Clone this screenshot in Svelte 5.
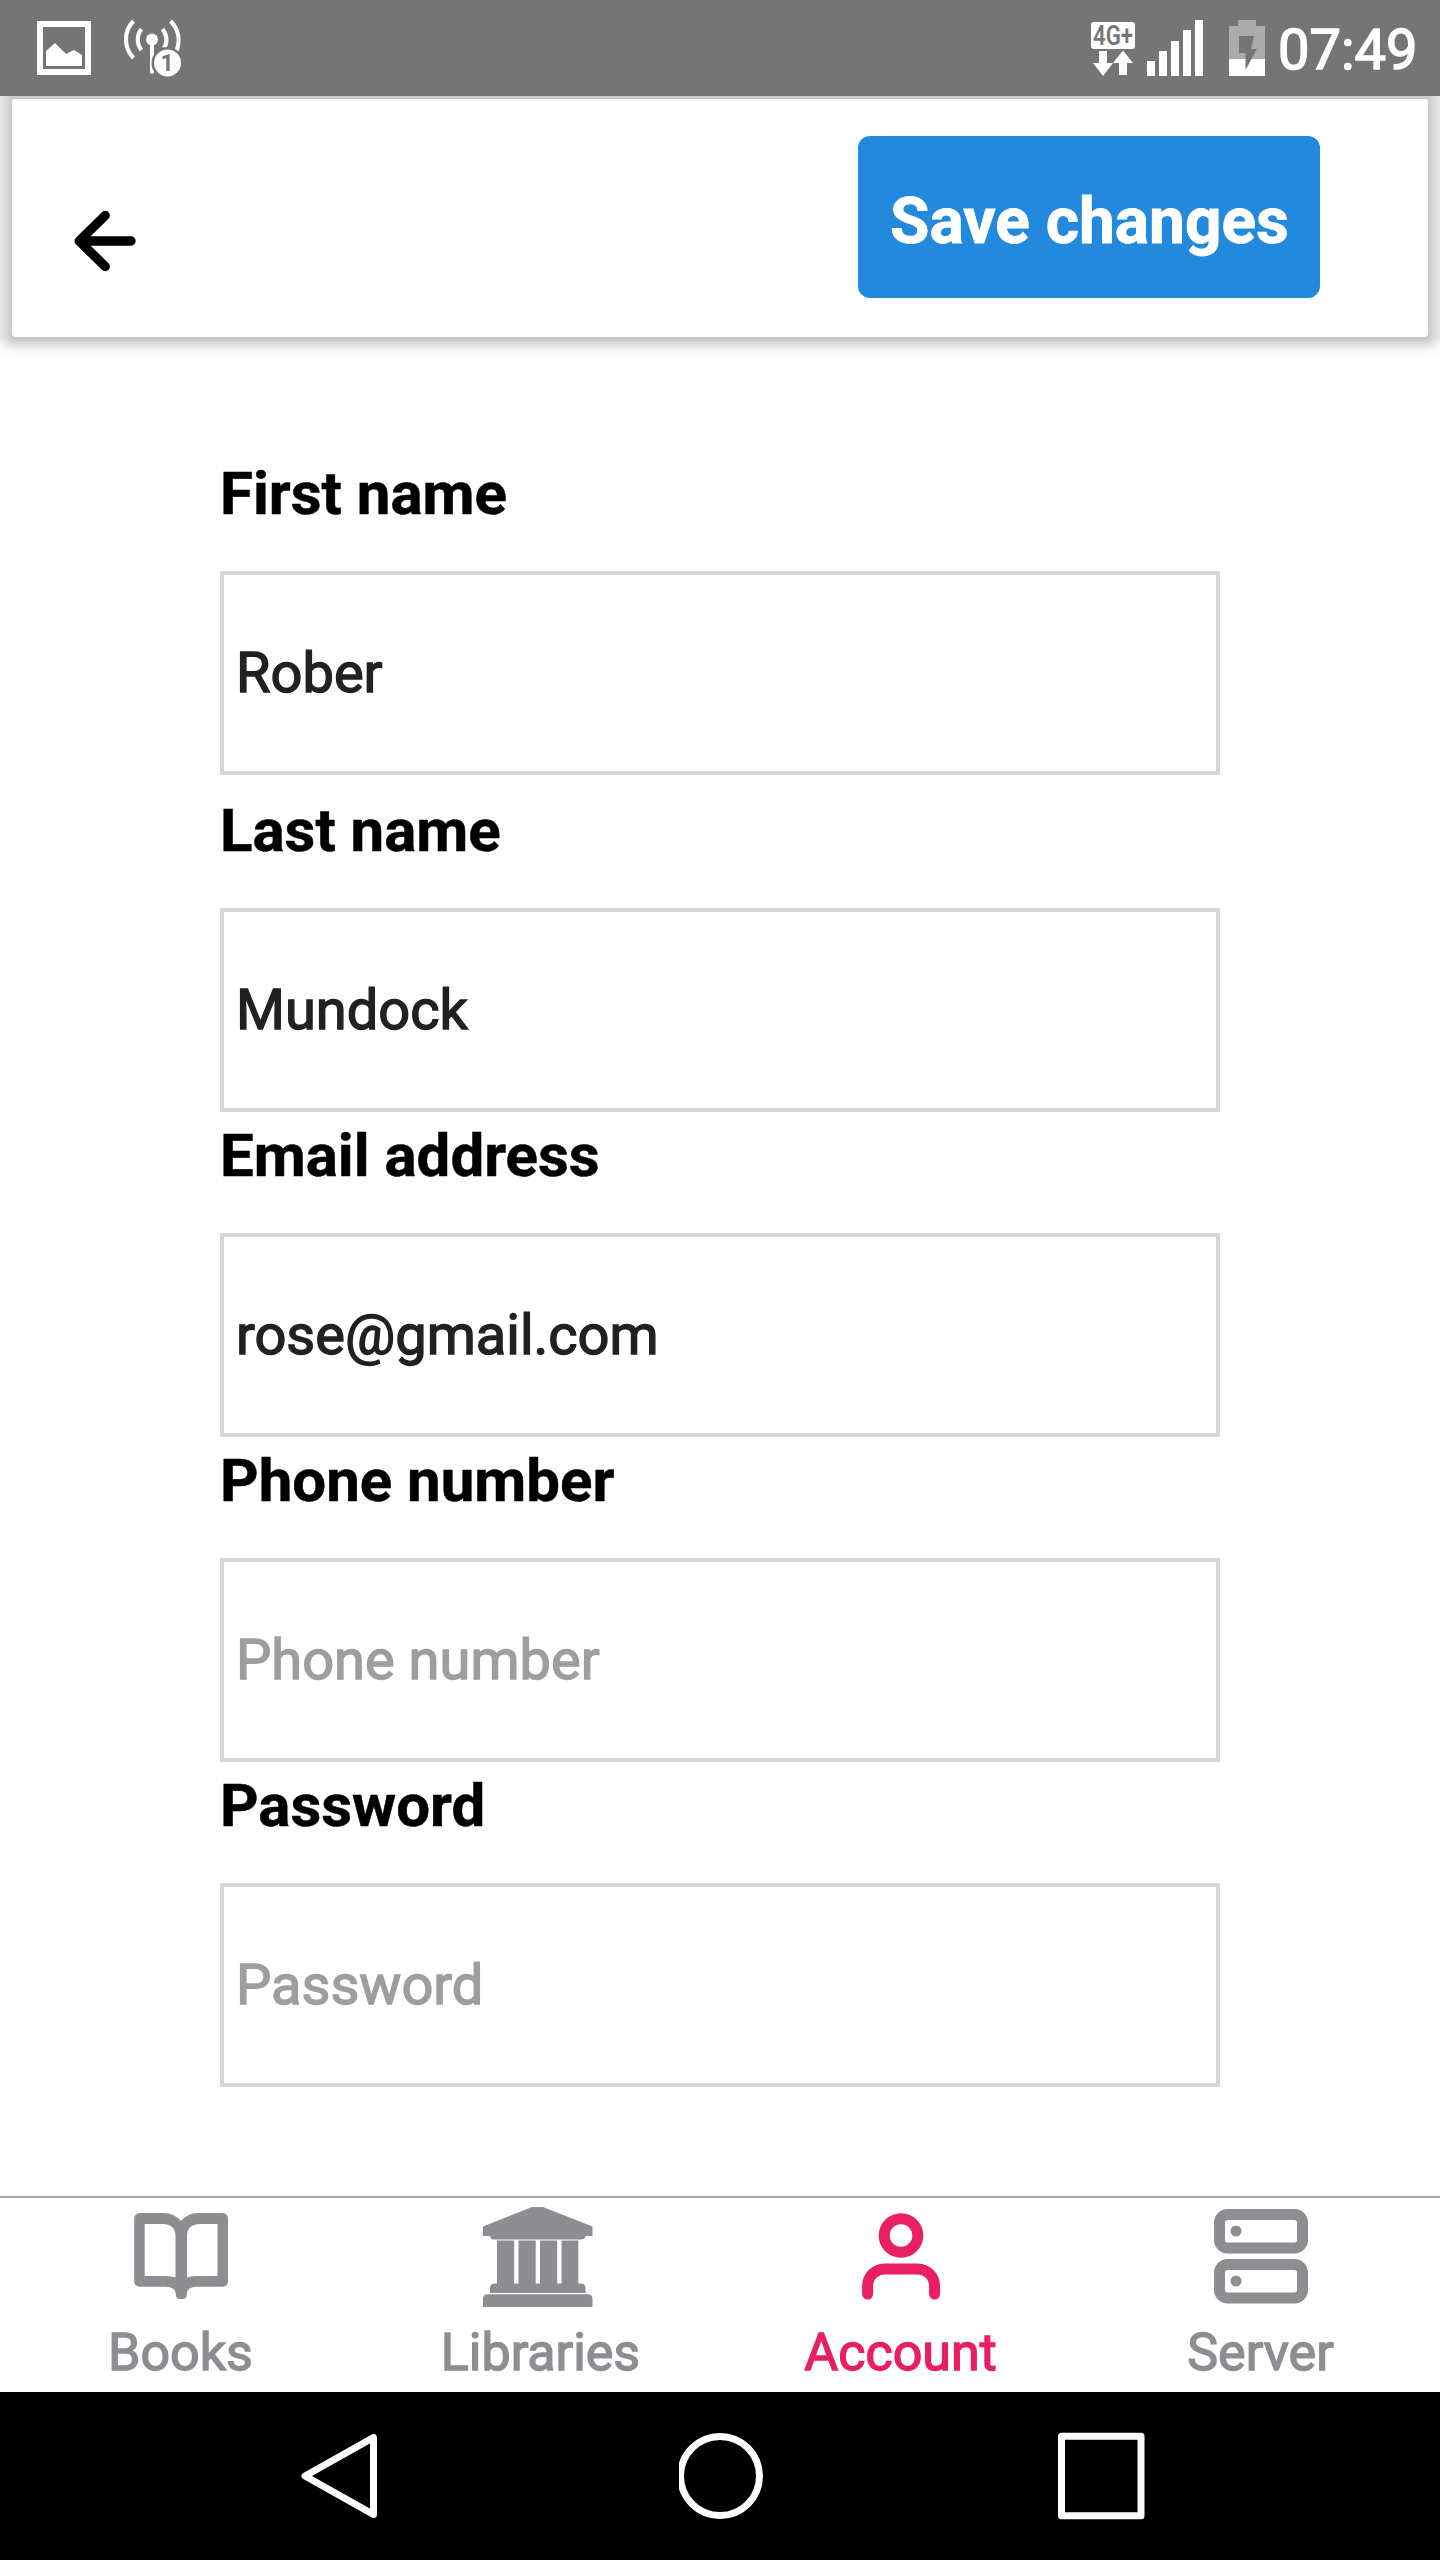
<script>
  let fields = $state([
    { id: 'first', label: 'First name', type: 'text', value: 'Rober' },
    { id: 'last', label: 'Last name', type: 'text', value: 'Mundock' },
    { id: 'email', label: 'Email address', type: 'text', value: 'rose@gmail.com' },
    { id: 'phone', label: 'Phone number', type: 'text', value: '' },
    { id: 'password', label: 'Password', type: 'password', value: '' }
  ]);
</script>

<div class="screen">
  <div class="status">
    <svg class="status-left" width="200" height="96" viewBox="0 0 200 96">
      <rect x="40" y="24" width="48" height="48" fill="none" stroke="#fff" stroke-width="6" />
      <path d="M46 51L55 43L66 54L74 50L82 55V66H46Z" fill="#fff" />
      <g fill="none" stroke="#fff" stroke-width="4.2">
        <path d="M133.500 21C123.500 31 123.500 48 133.500 58" />
        <path d="M141.500 29C136.500 35 136.500 44 141.500 50" />
        <path d="M162.500 29C167.500 35 167.500 44 163.500 48" />
        <path d="M170.500 21C178.500 29 180.500 40 176.500 51" />
      </g>
      <circle cx="152" cy="39.500" r="6" fill="#fff" />
      <rect x="150" y="40" width="4" height="33.500" fill="#fff" />
      <circle cx="167.500" cy="63" r="16" fill="#757575" />
      <circle cx="167.500" cy="63" r="13.500" fill="#fff" />
      <text class="badge" x="167" y="71" text-anchor="middle">1</text>
    </svg>
    <div class="status-right">
      <svg width="176" height="96" viewBox="1090 0 176 96">
        <rect x="1091" y="22" width="44" height="27" rx="3" fill="#fff" />
        <text class="network" x="1093" y="45" textLength="40" lengthAdjust="spacingAndGlyphs">4G+</text>
        <path d="M1099 51H1107V63H1113L1103 76L1093 63H1099Z" fill="#fff" />
        <path d="M1123 50.500L1133 63H1127V75H1119V63H1113Z" fill="#fff" />
        <path d="M1147 61h8v15h-8zM1159 51h8v25h-8zM1171 41h8v35h-8zM1183 30h8v46h-8zM1195 20h8v56h-8z" fill="#fff" />
        <path d="M1238 20H1256V26H1265V59H1229V26H1238Z" fill="#ababab" />
        <rect x="1229" y="59" width="36" height="17" fill="#fff" />
        <path d="M1239 36H1254L1251 49H1257L1245.500 70V53H1239Z" fill="#757575" />
      </svg>
      <span class="time">07:49</span>
    </div>
  </div>

  <header>
    <div class="bar">
      <svg class="back" width="64" height="64" viewBox="0 0 64 64">
        <path d="M33.200 6.500L7.200 32L33.200 57.500M7.200 32H59" fill="none" stroke="#000" stroke-width="9.400" stroke-linecap="round" stroke-linejoin="round" />
      </svg>
      <button class="save">Save changes</button>
    </div>
  </header>

  <main>
    {#each fields as field, i}
      <div class="field" class:spaced={i === 0}>
        <label for={field.id}>{field.label}</label>
        <input id={field.id} type={field.type} value={field.value} placeholder={field.label} />
      </div>
    {/each}
  </main>

  <nav class="tabs">
    <div class="tab">
      <svg width="120" height="120" viewBox="120 2198 120 120" fill="currentColor" fill-rule="evenodd">
        <path d="M140 2213H164Q174 2213 181 2221Q188 2213 198 2213H222.500Q228 2213.500 228 2219V2281Q228 2286.500 222.500 2286.700H197Q187 2287 187 2293.500Q186.500 2299 183 2299H179.500Q176 2299 175.700 2293.500Q175 2287 166 2286.700H140Q134.200 2286.500 134.200 2281V2219Q134.200 2213.500 140 2213ZM144.700 2224H164Q175.500 2225 175.500 2236V2277.500Q171 2276 166 2276H144.700ZM217.500 2224H198.500Q187 2225 187 2236V2277.500Q191 2276 196 2276H217.500Z" />
      </svg>
      <span>Books</span>
    </div>
    <div class="tab">
      <svg width="120" height="120" viewBox="480 2198 120 120" fill="currentColor">
        <path d="M483 2226.500L532 2207H543L592.500 2226.500V2236H585.500Q585 2239.500 581 2239.500H494Q490.500 2239.500 490 2236H483Z" />
        <path d="M497 2240.600h17.200v44h-17.200zM518.500 2240.600h17.200v44h-17.200zM540 2240.600h17.200v44h-17.200zM561.500 2240.600h16.800v44h-16.800z" />
        <path d="M490 2293V2288Q490 2283.500 495 2283.500H581Q585.500 2283.500 585.500 2288V2293ZM483 2307V2299Q483 2294.200 488 2294.200H587.500Q592.500 2294.200 592.500 2299V2307Z" />
      </svg>
      <span>Libraries</span>
    </div>
    <div class="tab active">
      <svg width="120" height="120" viewBox="840 2198 120 120" fill="none" stroke="currentColor" stroke-width="11" stroke-linecap="round">
        <circle cx="901" cy="2235.500" r="16.800" />
        <path d="M867.600 2294V2286A17 17 0 0 1 884.600 2269H917.600A17 17 0 0 1 934.600 2286V2294" />
      </svg>
      <span>Account</span>
    </div>
    <div class="tab">
      <svg width="120" height="120" viewBox="1200 2198 120 120" fill="none" stroke="currentColor" stroke-width="11">
        <rect x="1219.500" y="2214.500" width="83" height="33.500" rx="8" />
        <rect x="1219.500" y="2264.500" width="83" height="33.500" rx="8" />
        <g fill="currentColor" stroke="none">
          <circle cx="1236" cy="2231" r="5.500" />
          <circle cx="1236" cy="2281" r="5.500" />
        </g>
      </svg>
      <span>Server</span>
    </div>
  </nav>

  <div class="system">
    <svg width="88" height="88" viewBox="0 0 88 88"><path d="M5 44L73.500 5.500V82.500Z" stroke-linejoin="round" /></svg>
    <svg width="88" height="88" viewBox="0 0 88 88"><circle cx="41" cy="44" r="39.500" /></svg>
    <svg width="88" height="88" viewBox="0 0 88 88"><rect x="4.500" y="4.300" width="79.500" height="79.500" stroke-linejoin="round" /></svg>
  </div>
</div>

<style>
  :global(body) {
    background: #fff;
  }
  .screen {
    width: 1440px;
    height: 2560px;
    display: flex;
    flex-direction: column;
    overflow: hidden;
    font-family: Roboto, sans-serif;
    background: #fff;
  }
  svg {
    display: block;
    flex: none;
  }
  .status {
    height: 96px;
    flex: none;
    display: flex;
    justify-content: space-between;
    background: #757575;
    color: #fff;
  }
  .status-right {
    display: flex;
    width: 350px;
  }
  .badge {
    font-size: 23px;
    font-weight: 700;
    fill: #757575;
  }
  .network {
    font-size: 27px;
    font-weight: 600;
    fill: #757575;
  }
  .time {
    margin-left: 12px;
    padding-top: 16px;
    font-size: 56px;
    line-height: 68px;
    -webkit-text-stroke: 1.5px currentColor;
  }
  header {
    flex: none;
    height: 242px;
    box-sizing: border-box;
    padding: 3px 12px 1px;
    background: linear-gradient(90deg, #e6e6e6, #cbcbcb 12px, #cbcbcb 1428px, #e6e6e6);
    box-shadow: 0 8px 14px -4px rgba(0, 0, 0, 0.34);
  }
  .bar {
    height: 238px;
    display: flex;
    align-items: flex-start;
    justify-content: space-between;
    box-sizing: border-box;
    padding: 37px 108px 0 60px;
    border-radius: 4px;
    background: #fff;
  }
  .back {
    margin-top: 73px;
  }
  .save {
    width: 462px;
    height: 162px;
    padding: 8px 0 0 1px;
    border: 0;
    border-radius: 12px;
    background: #2289dc;
    color: #fff;
    font: 700 64px/75px Roboto, sans-serif;
    -webkit-text-stroke: 0.8px currentColor;
    white-space: nowrap;
  }
  main {
    flex: 1;
    padding: 120px 220px 0;
  }
  .field {
    display: flex;
    flex-direction: column;
    gap: 43px;
    margin-bottom: 8px;
  }
  .spaced {
    margin-bottom: 20px;
  }
  label {
    height: 70px;
    font-size: 60px;
    font-weight: 700;
    line-height: 72px;
    color: #000;
    -webkit-text-stroke: 0.5px currentColor;
  }
  input {
    width: 100%;
    height: 204px;
    box-sizing: border-box;
    margin: 0;
    padding: 0 12px;
    border: 4px solid #d5d6da;
    border-radius: 0;
    outline: 0;
    background: transparent;
    color: #212121;
    font: 400 56px Roboto, sans-serif;
    -webkit-text-stroke: 1.4px currentColor;
  }
  input::placeholder {
    color: #9e9e9e;
    opacity: 1;
  }
  .tabs {
    flex: none;
    height: 196px;
    box-sizing: border-box;
    border-top: 2px solid #a7a7a7;
    display: grid;
    grid-template-columns: repeat(4, 1fr);
  }
  .tab {
    display: flex;
    flex-direction: column;
    align-items: center;
    gap: 4px;
    color: #8e8d92;
    font-size: 52px;
    line-height: 61px;
  }
  .tab span {
    padding-left: 1px;
    -webkit-text-stroke: 1.4px currentColor;
  }
  .tab.active {
    color: #e91e63;
  }
  .system {
    flex: none;
    height: 168px;
    box-sizing: border-box;
    padding: 40px 295px 0 300px;
    display: flex;
    justify-content: space-between;
    background: #000;
  }
  .system svg {
    fill: none;
    stroke: #fff;
    stroke-width: 7;
  }
</style>
